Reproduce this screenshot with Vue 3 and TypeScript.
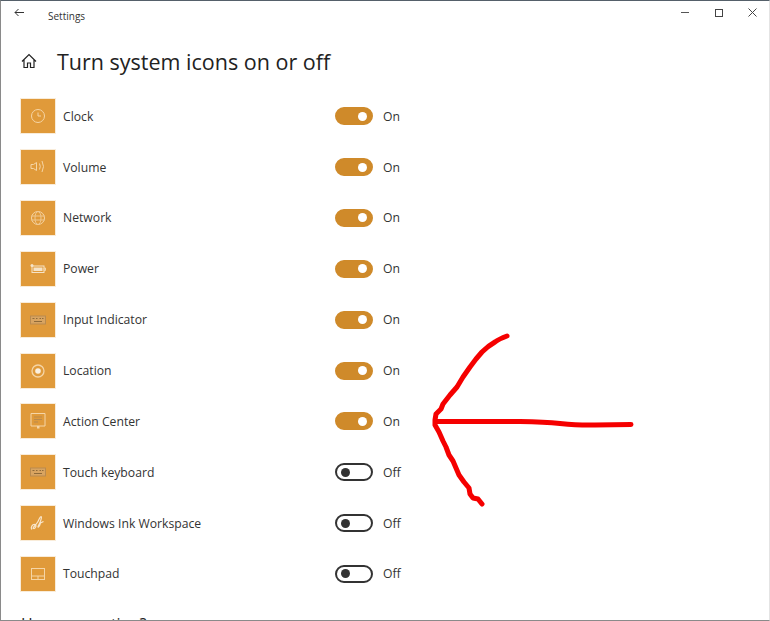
<script setup lang="ts">
interface Row {
  label: string;
  icon: string;
  on: boolean;
}

const rows: Row[] = [
  { label: 'Clock', icon: 'clock', on: true },
  { label: 'Volume', icon: 'volume', on: true },
  { label: 'Network', icon: 'network', on: true },
  { label: 'Power', icon: 'power', on: true },
  { label: 'Input Indicator', icon: 'input', on: true },
  { label: 'Location', icon: 'location', on: true },
  { label: 'Action Center', icon: 'action', on: true },
  { label: 'Touch keyboard', icon: 'keyboard', on: false },
  { label: 'Windows Ink Workspace', icon: 'ink', on: false },
  { label: 'Touchpad', icon: 'touchpad', on: false },
];

// hand drawn red arrow
const arrowHead =
  'M507 336 Q499 339 495 342 Q488 346 482 352 L476 359 L470 367 L463 377 L457 387 L450 395 L443 404 L441 409 L436 414 L435 420 L435 425 L439 432 L443 441 L446 447 L449 455 L453 461 L456 468 L459 475 L464 482 L469 488 L470 494 L473 498 L478 499 L482 504';
const arrowShaft = 'M436 421.5 L470 421.500 L520 421.500 Q545 422 560 423.500 Q580 425.500 595 425 L631 424.500';
</script>

<template>
  <div class="window">
    <div class="titlebar">
      <svg class="back" width="10" height="9" viewBox="0 0 10 9">
        <path d="M10 4.500H1M4.500 1 1 4.500 4.500 8" fill="none" stroke="#333" stroke-width="1" />
      </svg>
      <span class="app-name">Settings</span>
      <div class="controls">
        <span class="ctl"><i class="min"></i></span>
        <span class="ctl"><i class="max"></i></span>
        <span class="ctl">
          <svg width="9" height="9" viewBox="0 0 9 9">
            <path d="M.5.5l8 8M8.500.5l-8 8" stroke="#444" stroke-width="1" fill="none" />
          </svg>
        </span>
      </div>
    </div>

    <div class="heading">
      <svg class="home" width="16" height="16" viewBox="0 0 16 16">
        <path d="M1 8.500 8 1.500l7 7M3 7v7.500h3.500V10h3v4.500H13V7" fill="none" stroke="#222" stroke-width="1.200" />
      </svg>
      <h1>Turn system icons on or off</h1>
    </div>

    <div class="list">
      <div v-for="row in rows" :key="row.label" class="row">
        <div class="tile">
          <svg width="18" height="18" viewBox="0 0 18 18" fill="none" stroke="#f5d5a6" stroke-width="1">
            <template v-if="row.icon === 'clock'">
              <circle cx="9" cy="9" r="6.500" />
              <path d="M9 5.500V9h3" />
            </template>
            <template v-else-if="row.icon === 'volume'">
              <path d="M2 6.500h2.500l3-2v8l-3-2H2zM10.500 5.500q1.500 3 0 6M13 3q3 5.500 0 11" />
            </template>
            <template v-else-if="row.icon === 'network'">
              <circle cx="9" cy="9" r="6.500" />
              <ellipse cx="9" cy="9" rx="3" ry="6.500" stroke="#f0c88f" />
              <path d="M2.500 7h13M2.500 11h13" stroke="#f0c88f" />
            </template>
            <template v-else-if="row.icon === 'power'">
              <rect x="3" y="6" width="12" height="6.500" stroke="#f5e3c8" />
              <rect x="4.500" y="7.500" width="9" height="3.500" fill="#f5e3c8" stroke="none" />
              <path d="M15 8v2.500h1.500V8z" />
              <circle cx="3" cy="5.500" r="1.500" fill="#f5e3c8" stroke="none" />
            </template>
            <template v-else-if="row.icon === 'input' || row.icon === 'keyboard'">
              <rect x="1.500" y="5" width="15" height="8" stroke="#b98a4e" fill="#d9a460" />
              <path d="M3.500 7.500h2M7 7.500h1.500M10.500 7.500h1.500M13 7.500h1.500M5 10.500h8" stroke="#8f6a38" />
            </template>
            <template v-else-if="row.icon === 'location'">
              <circle cx="9" cy="9" r="6" stroke-width="1.300" />
              <circle cx="9" cy="9" r="2.800" fill="#faf0e0" stroke="none" />
            </template>
            <template v-else-if="row.icon === 'action'">
              <path d="M2 1.500h14v12.500H2z" />
              <path d="M5 5h8M5 7.500h8M5 10h4" stroke="#b98a4e" />
              <path d="M8 14h2.500v2.500H8z" fill="#f5d5a6" stroke="none" />
            </template>
            <template v-else-if="row.icon === 'ink'">
              <path d="M3 15.500C1 13.500 3.500 10 6 10.500c2 .5.500 4.500-1.500 4C3 14 7 11 9 7.500c1-1.800 2-5 3-5s0 4-1.500 7-2 4-1 3.500 2-4 2-4l3-1.500" stroke="#f8e6cc" stroke-width="1.200" />
            </template>
            <template v-else>
              <rect x="2.500" y="3.500" width="13" height="11" />
              <path d="M2.500 11h13M9 11v3.500" />
            </template>
          </svg>
        </div>
        <span class="label">{{ row.label }}</span>
        <div class="toggle" :class="{ on: row.on }"><i class="knob"></i></div>
        <span class="state">{{ row.on ? 'On' : 'Off' }}</span>
      </div>
      <h2 class="question">Have a question?</h2>
    </div>

    <svg class="arrow" width="770" height="621" viewBox="0 0 770 621" fill="none" stroke="#f50000" stroke-width="5" stroke-linecap="round" stroke-linejoin="round">
      <path :d="arrowHead" />
      <path :d="arrowShaft" />
    </svg>
  </div>
</template>

<style>
html,
body {
  margin: 0;
  background: #fff;
  overflow: hidden;
}
</style>

<style scoped>
.window {
  position: relative;
  width: 770px;
  height: 621px;
  box-sizing: border-box;
  overflow: hidden;
  background: #fff;
  border: solid #8a8a8a;
  border-width: 1px 1px 1px 1px;
  border-top-color: #55606a;
  border-right-color: #e4e4e4;
  color: #222;
  font-family: "Open Sans", "Noto Sans", sans-serif;
}

.titlebar {
  display: flex;
  align-items: center;
  height: 30px;
  padding-left: 13px;
}

.back {
  align-self: flex-start;
  margin-top: 7px;
}

.app-name {
  margin-left: 24px;
  font-size: 10px;
  color: #333;
}

.controls {
  display: flex;
  align-self: flex-start;
  margin-left: auto;
}

.ctl {
  display: flex;
  align-items: center;
  justify-content: center;
  width: 33.500px;
  height: 23px;
}

.min {
  width: 8px;
  height: 1px;
  background: #555;
}

.max {
  width: 6px;
  height: 6px;
  border: 1px solid #444;
}

.heading {
  display: flex;
  align-items: center;
  height: 36px;
  margin-top: 12px;
  padding-left: 20px;
}

.home {
  flex: none;
}

.heading h1 {
  margin: 0 0 0 20px;
  font-size: 21.500px;
  font-weight: 400;
  color: #222;
}

.list {
  margin-top: 20.300px;
  padding-left: 20px;
}

.row {
  display: flex;
  align-items: center;
  height: 34px;
  margin-bottom: 16.850px;
}

.tile {
  display: flex;
  align-items: center;
  justify-content: center;
  flex: none;
  width: 34px;
  height: 34px;
  background: #e09a3a;
  box-shadow: 0 0 0 1px #f9ecd9;
}

.label {
  width: 272px;
  margin-left: 8px;
  font-size: 12.200px;
  color: #333;
}

.toggle {
  display: flex;
  align-items: center;
  box-sizing: border-box;
  width: 38px;
  height: 18px;
  padding: 0 4px;
  border: 2px solid #333;
  border-radius: 9px;
}

.toggle.on {
  justify-content: flex-end;
  background: #cf8a2a;
  border-color: #cf8a2a;
}

.knob {
  width: 9px;
  height: 9px;
  border-radius: 50%;
  background: #333;
}

.toggle.on .knob {
  background: #fff;
}

.state {
  margin-left: 10px;
  font-size: 12.200px;
  color: #333;
}

.question {
  margin: 0;
  padding-top: 5px;
  font-size: 15.800px;
  font-weight: 400;
  color: #222;
}

.arrow {
  position: absolute;
  top: -1px;
  left: -1px;
}
</style>
